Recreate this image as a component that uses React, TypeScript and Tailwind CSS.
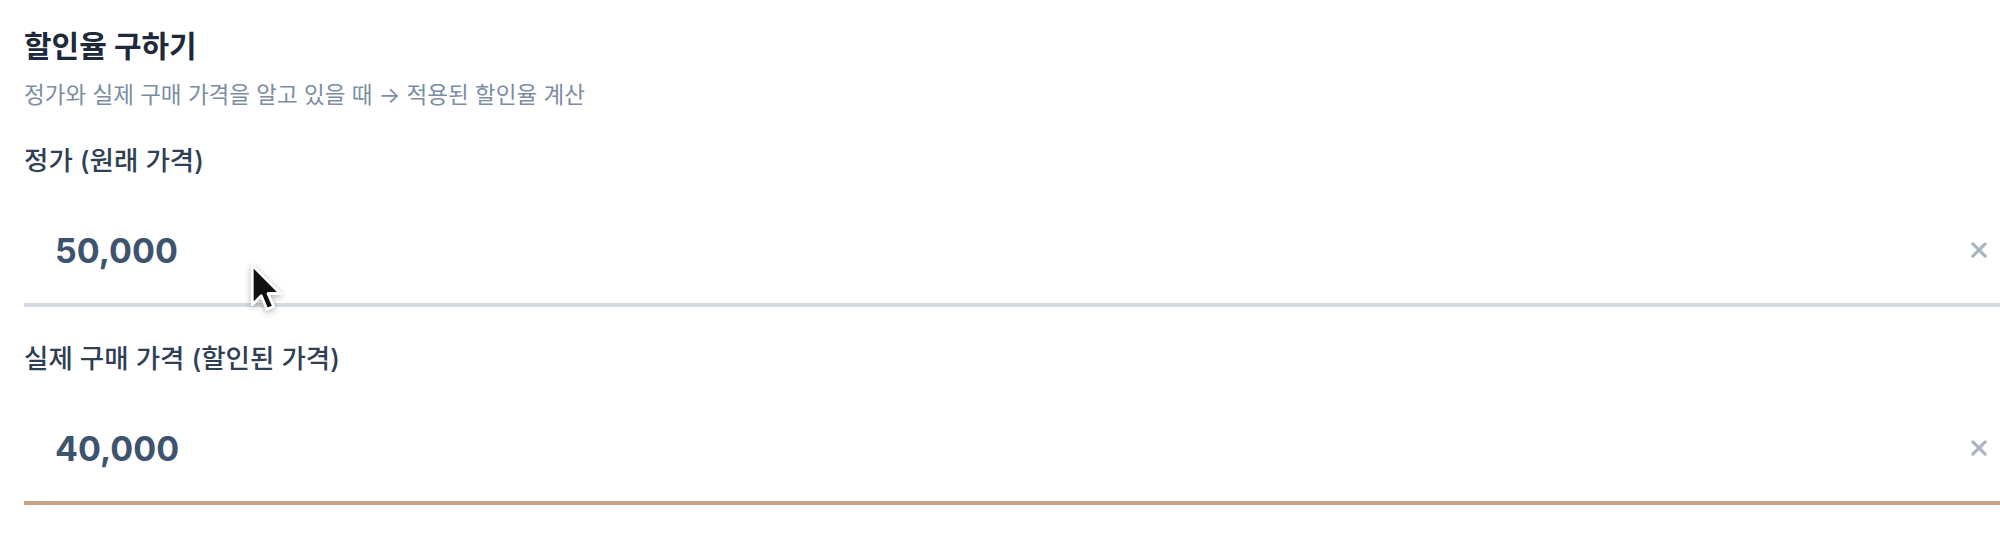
import React from "react";

const sans = "font-['Inter','Noto_Sans_CJK_KR',sans-serif]";

function PriceField({
  label,
  value,
  lineColor,
}: {
  label: string;
  value: string;
  lineColor: string;
}) {
  return (
    <div>
      <label className="block text-[26.5px] font-medium leading-[36px] text-[#2f3f54]">
        {label}
      </label>
      <div
        className={`mt-[19px] flex h-[110px] items-center border-b-4 pl-[31px] pr-[9px] ${lineColor}`}
      >
        <input
          readOnly
          defaultValue={value}
          className={`w-full bg-transparent text-[34px] font-bold text-[#3d536e] outline-none ${sans}`}
        />
        <button className="flex h-6 w-6 items-center justify-center text-[#a9b5c4]">
          <svg width="18" height="18" viewBox="0 0 16 16" fill="none">
            <path
              d="M2.5 2.5l11 11M13.5 2.5l-11 11"
              stroke="currentColor"
              strokeWidth="2.8"
              strokeLinecap="round"
            />
          </svg>
        </button>
      </div>
    </div>
  );
}

export default function App() {
  return (
    <div className={`relative min-h-[536px] w-[2000px] bg-white pl-6 pt-[26px] ${sans}`}>
      {/* Header */}
      <h2 className="text-[30px] font-bold leading-[40px] text-[#1e293b]">할인율 구하기</h2>
      <p className="mt-[14px] text-[22.5px] leading-[30px] text-[#7b8da4]">
        정가와 실제 구매 가격을 알고 있을 때 → 적용된 할인율 계산
      </p>

      {/* Inputs */}
      <div className="mt-[32px] flex flex-col gap-[33px]">
        <PriceField label="정가 (원래 가격)" value="50,000" lineColor="border-[#d3dbe4]" />
        <PriceField
          label="실제 구매 가격 (할인된 가격)"
          value="40,000"
          lineColor="border-[#c9a28a]"
        />
      </div>

      {/* Mouse pointer */}
      <svg
        className="pointer-events-none absolute left-[250px] top-[263px] drop-shadow-[0_2px_3px_rgba(0,0,0,0.3)]"
        width="36"
        height="52"
        viewBox="0 0 32 46"
      >
        <path
          d="M2 2 L2 37 L10 29 L15 41 L21 38.5 L16 27 L27 27 Z"
          fill="#111"
          stroke="#fff"
          strokeWidth="2.5"
          strokeLinejoin="round"
        />
      </svg>
    </div>
  );
}
